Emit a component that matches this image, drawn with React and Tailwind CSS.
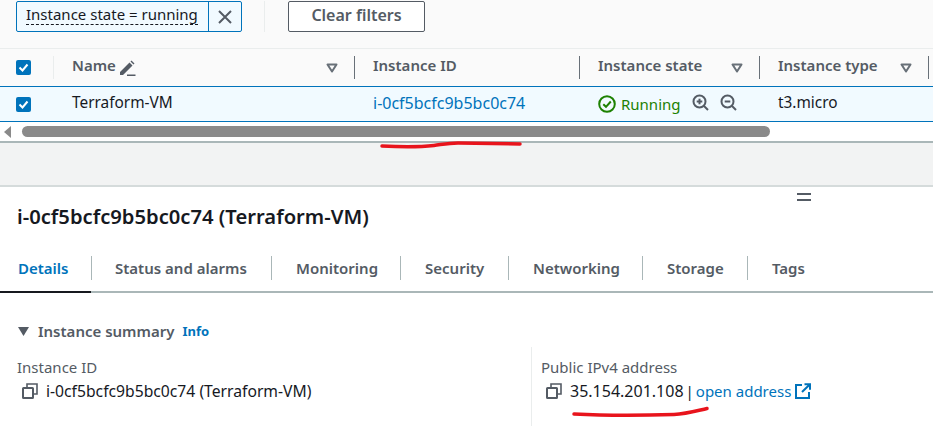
import React from 'react';

const FONT = "font-['Noto_Sans','Open_Sans',sans-serif]";

function Check() {
  return (
    <span className="flex h-[15px] w-[15px] items-center justify-center rounded-[2px] bg-[#0073bb]">
      <svg width="11" height="11" viewBox="0 0 11 11" fill="none" stroke="#fff" strokeWidth="2">
        <path d="M1.5 5.5 4.5 8.5 9.5 2.500" />
      </svg>
    </span>
  );
}

function SortCaret() {
  return (
    <svg width="12" height="10" viewBox="0 0 12 10" fill="none" stroke="#687078" strokeWidth="2">
      <path d="M1.5 1.5h9L6 8.5z" strokeLinejoin="round" />
    </svg>
  );
}

function CopyIcon() {
  return (
    <svg width="16" height="16" viewBox="0 0 16 16" fill="none" stroke="#545b64" strokeWidth="2">
      <rect x="1" y="5" width="10" height="10" rx="0.5" />
      <path d="M5 4V1h10v10h-3" strokeWidth="1.6" />
    </svg>
  );
}

function Magnifier({ plus }) {
  return (
    <svg width="17" height="17" viewBox="0 0 17 17" fill="none" stroke="#545b64" strokeWidth="2">
      <circle cx="7.5" cy="7.5" r="6" />
      <path d="M12 12l4 4" />
      <path d="M4.7 7.5h5.6" />
      {plus && <path d="M7.5 4.7v5.6" />}
    </svg>
  );
}

function HeaderCell({ width, children, caret, className = '' }) {
  return (
    <div className={`flex h-[23px] items-center justify-between pl-[18px] pr-[16px] border-r border-[#687078] ${className}`} style={{ width }}>
      {children}
      {caret && <SortCaret />}
    </div>
  );
}

const tabs = [
  { label: 'Details', width: 92, pad: 'pl-[18px]' },
  { label: 'Status and alarms', width: 180, pad: 'pl-[23px]' },
  { label: 'Monitoring', width: 129, pad: 'pl-[24px]' },
  { label: 'Security', width: 108, pad: 'pl-[24px]' },
  { label: 'Networking', width: 134, pad: 'pl-[24px]' },
  { label: 'Storage', width: 105, pad: 'pl-[24px]' },
  { label: 'Tags', width: 80, pad: 'pl-[24px]', last: true },
];

export default function App() {
  return (
    <div className={`relative h-[426px] w-[933px] overflow-hidden bg-white text-[15px] text-[#16191f] ${FONT}`}>
      {/* Filter bar */}
      <div className="flex h-[49px] items-start border-b border-[#eaeded] bg-[#fafafa] pt-px">
        <div className="ml-4 flex h-[31px] w-[226px] rounded-[2px] border border-[#0073bb] bg-[#f1faff]">
          <div className="flex w-[191px] items-center pl-[9px] pb-[3px]">
            <span className="border-b border-dashed border-[#16191f] leading-[19px]">Instance state = running</span>
          </div>
          <div className="flex flex-1 items-center justify-center border-l border-[#0073bb]">
            <svg width="16" height="16" viewBox="0 0 16 16" fill="none" stroke="#545b64" strokeWidth="2">
              <path d="M2 2l12 12M14 2 2 14" />
            </svg>
          </div>
        </div>
        <div className="ml-[22px] h-[31px] w-px bg-[#eaeded]" />
        <button className="ml-[23px] h-[31px] w-[137px] rounded-[2px] border border-[#545b64] bg-white pb-[3px] text-[16px] font-semibold text-[#545b64]">
          Clear filters
        </button>
      </div>

      {/* Table header */}
      <div className="flex h-[37px] items-center bg-[#fafafa] font-semibold text-[#545b64]">
        <div className="flex h-[23px] w-[54px] items-center border-r border-[#eaeded] pl-4">
          <Check />
        </div>
        <HeaderCell width={301} caret>
          <span className="flex items-center gap-[3px]">
            <span className="pb-[4px]">Name</span>
            <svg width="17" height="16" viewBox="0 0 17 16" fill="#545b64">
              <path d="M1 12 10.5 2.5l3 3L4 15H1zM11.5 1.5l1-1 3 3-1 1zM8 14.5h8.5V16H8z" />
            </svg>
          </span>
        </HeaderCell>
        <HeaderCell width={225}>
          <span className="pb-[4px]">Instance ID</span>
        </HeaderCell>
        <HeaderCell width={180} caret>
          <span className="pb-[4px]">Instance state</span>
        </HeaderCell>
        <HeaderCell width={169} caret>
          <span className="pb-[4px]">Instance type</span>
        </HeaderCell>
      </div>

      {/* Selected row */}
      <div className="flex h-[36px] items-center border-y border-[#0073bb] bg-[#f1faff]">
        <div className="w-[54px] pl-4">
          <Check />
        </div>
        <div className="w-[301px] pb-[3px] pl-[18px] text-[15.4px]">Terraform-VM</div>
        <div className="w-[225px] pb-[3px] pl-[18px] text-[16px] text-[#0073bb]">i-0cf5bcfc9b5bc0c74</div>
        <div className="flex w-[180px] items-center pl-[18px]">
          <svg width="18" height="18" viewBox="0 0 18 18" fill="none" stroke="#1d8102" strokeWidth="2">
            <circle cx="9" cy="9" r="7.8" />
            <path d="M5.3 9.2 8 11.8l4.8-5.3" />
          </svg>
          <span className="ml-[5px] text-[#1d8102]">Running</span>
          <span className="ml-[11px] pb-[4px]"><Magnifier plus /></span>
          <span className="ml-[11px] pb-[4px]"><Magnifier /></span>
        </div>
        <div className="pb-[3px] pl-[18px] text-[15.4px]">t3.micro</div>
      </div>

      {/* Horizontal scrollbar */}
      <div className="flex h-[21px] items-start border-b-2 border-[#aab7b8] bg-white pt-[4px]">
        <svg className="ml-[4px]" width="7" height="12" viewBox="0 0 7 12" fill="#8a8a8a">
          <path d="M7 0v12L0 6z" />
        </svg>
        <div className="ml-[11px] h-[11px] w-[748px] rounded-full bg-[#8a8a8a]" />
      </div>

      {/* Gap between table and split panel */}
      <div className="h-[44px] border-b-2 border-[#d5dbdb] bg-[#f2f3f3]" />

      {/* Split panel */}
      <div className="relative">
        <div className="absolute left-[797px] top-[6px] flex h-[8px] w-[14px] flex-col justify-between">
          <div className="h-[2px] bg-[#545b64]" />
          <div className="h-[2px] bg-[#545b64]" />
        </div>
        <h2 className="pl-[17px] pt-[15px] text-[20.2px] font-semibold leading-[28px]">i-0cf5bcfc9b5bc0c74 (Terraform-VM)</h2>

        {/* Tabs */}
        <div className="relative mt-[25px] flex h-[38px] border-b-2 border-[#aab7b8] pt-[1px] font-semibold text-[#545b64]">
          {tabs.map((tab) => (
            <div
              key={tab.label}
              className={`flex h-[24px] items-center ${tab.pad} ${tab.last ? '' : 'border-r border-[#aab7b8]'} ${tab.label === 'Details' ? 'text-[#0073bb]' : ''}`}
              style={{ width: tab.width }}
            >
              {tab.label}
            </div>
          ))}
          <div className="absolute bottom-[-2px] left-0 h-[2px] w-[91px] bg-[#16191f]" />
        </div>

        {/* Instance summary */}
        <div className="flex items-center pl-[18px] pt-[28px] leading-[20px]">
          <svg width="11" height="9" viewBox="0 0 11 9" fill="#545b64">
            <path d="M0 0h11L5.5 9z" />
          </svg>
          <span className="ml-[9px] font-semibold text-[#545b64]">Instance summary</span>
          <span className="ml-[8px] text-[13px] font-bold text-[#0073bb]">Info</span>
        </div>
        <div className="mt-[6px] flex h-[80px]">
          <div className="w-[531px] pl-[17px] pt-[10px]">
            <div className="leading-[20px] text-[#545b64]">Instance ID</div>
            <div className="mt-[4px] flex items-center pl-[5px] leading-[20px]">
              <CopyIcon />
              <span className="ml-[8px] text-[15.7px]">i-0cf5bcfc9b5bc0c74 (Terraform-VM)</span>
            </div>
          </div>
          <div className="border-l border-[#eaeded] pl-[9px] pt-[10px]">
            <div className="leading-[20px] text-[#545b64]">Public IPv4 address</div>
            <div className="mt-[4px] flex items-center pl-[5px] leading-[20px]">
              <CopyIcon />
              <span className="ml-[8px] text-[16px]">35.154.201.108</span>
              <span className="ml-[2px]">|</span>
              <span className="ml-[2px] text-[#0073bb]">open address</span>
              <svg className="ml-[4px]" width="16" height="16" viewBox="0 0 16 16" fill="none" stroke="#0073bb" strokeWidth="2">
                <path d="M7 2H1v13h13V9" />
                <path d="M9.5 1.2H15v5.5M15 1.2 7 9" />
              </svg>
            </div>
          </div>
        </div>
      </div>

      {/* Hand-drawn red annotations */}
      <svg className="absolute left-0 top-0" width="933" height="426" fill="none" stroke="#e8141c" strokeWidth="3.500" strokeLinecap="round">
        <path d="M382 146c20 1 38 1 52-0.5 8-1 14-2.5 24-2.5l62 1" />
        <path d="M574 414c28 1.500 70 1.500 100 0.500 12-0.500 22-3.500 33-6" />
      </svg>
    </div>
  );
}
